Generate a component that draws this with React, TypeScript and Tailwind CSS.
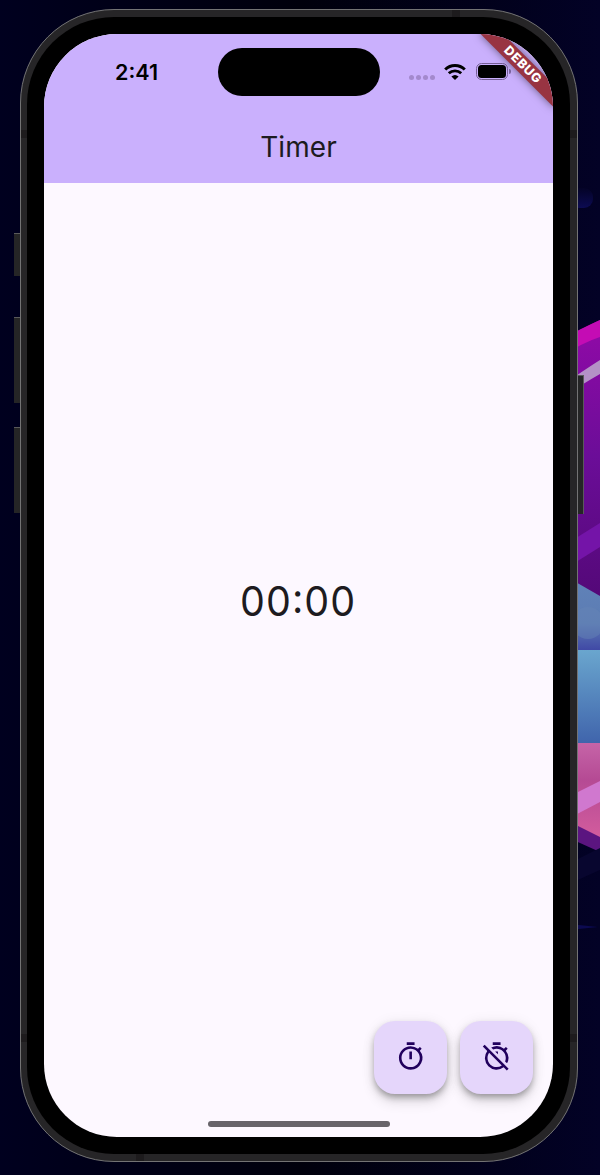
import React from "react";
import { MdOutlineTimer, MdOutlineTimerOff } from "react-icons/md";

function Wallpaper() {
  return (
    <svg className="absolute inset-y-0 right-0" width="40" height="1175" viewBox="560 0 40 1175">
      <defs>
        <linearGradient id="violet" x1="0" y1="340" x2="0" y2="600" gradientUnits="userSpaceOnUse">
          <stop offset="0" stopColor="#8c0aa5" />
          <stop offset="0.45" stopColor="#6b0d98" />
          <stop offset="1" stopColor="#530877" />
        </linearGradient>
        <linearGradient id="slate" x1="0" y1="580" x2="0" y2="652" gradientUnits="userSpaceOnUse">
          <stop offset="0" stopColor="#6082b8" />
          <stop offset="0.6" stopColor="#5c7cb3" />
          <stop offset="1" stopColor="#3e45a5" />
        </linearGradient>
        <linearGradient id="sky" x1="0" y1="650" x2="0" y2="745" gradientUnits="userSpaceOnUse">
          <stop offset="0" stopColor="#6aa6ce" />
          <stop offset="1" stopColor="#3f63ab" />
        </linearGradient>
        <linearGradient id="rose" x1="0" y1="742" x2="0" y2="850" gradientUnits="userSpaceOnUse">
          <stop offset="0" stopColor="#c665a8" />
          <stop offset="0.35" stopColor="#b54a94" />
          <stop offset="1" stopColor="#d9609f" />
        </linearGradient>
        <linearGradient id="bubble" x1="0" y1="188" x2="0" y2="208" gradientUnits="userSpaceOnUse">
          <stop offset="0" stopColor="#040327" />
          <stop offset="1" stopColor="#0c0b52" />
        </linearGradient>
      </defs>
      <rect x="570" y="188" width="23" height="20" rx="9" fill="url(#bubble)" />
      <path d="M560 340 600 320V600L560 580Z" fill="url(#violet)" />
      <path d="M560 340Q584 327 600 320V337Q584 342 560 357Z" fill="#c40cb4" />
      <path d="M560 387Q584 370 600 360V374Q584 383 560 399Z" fill="#b491c6" />
      <path d="M560 548 600 523V547L560 572Z" fill="#7414a8" />
      <path d="M560 573 600 596V652H560Z" fill="url(#slate)" />
      <circle cx="588" cy="623" r="16" fill="#6684b5" opacity="0.45" />
      <path d="M560 650H600V744H560Z" fill="url(#sky)" />
      <path d="M560 743H600V840L560 818Z" fill="url(#rose)" />
      <path d="M560 801 600 781V802L560 823Z" fill="#d078cf" />
      <path d="M560 817 600 837V852L560 834Z" fill="#5b1580" />
      <path d="M560 868 600 848V870L560 888Z" fill="#08062f" />
      <path d="M560 923 598 927 560 931Z" fill="#0c0a50" />
    </svg>
  );
}

function SideButton({ className }: { className: string }) {
  return <div className={`absolute border-t border-[#5a5a5b] bg-[#252526] ${className}`} />;
}

function StatusBar() {
  return (
    <div className="flex h-[76px] items-center">
      <span className="mt-px ml-[71px] w-[103px] text-[21.5px] leading-none font-semibold text-black">2:41</span>
      <div className="h-12 w-[162px] rounded-full bg-black" />
      <div className="mt-[11px] ml-[29px] flex gap-[2.4px]">
        <i className="size-[4.6px] rounded-full bg-[#a389cd]" />
        <i className="size-[4.6px] rounded-full bg-[#a389cd]" />
        <i className="size-[4.6px] rounded-full bg-[#a389cd]" />
        <i className="size-[4.6px] rounded-full bg-[#a389cd]" />
      </div>
      <svg className="-mt-px ml-[9px]" width="22" height="16" viewBox="0 0 22 16" fill="none">
        <path d="M1.2 5.5C6.7.2 15.3.2 20.8 5.5" stroke="#000" strokeWidth="3" />
        <path d="M4.8 9.3C8.3 6 13.7 6 17.2 9.3" stroke="#000" strokeWidth="2.9" />
        <path d="M11 16 7.4 12.6Q11 9.2 14.6 12.6Z" fill="#000" />
      </svg>
      <div className="-mt-px ml-[10px] flex items-center gap-px">
        <div className="flex h-[17px] w-8 rounded-[5.5px] border border-[#765f96] p-px">
          <div className="flex-1 rounded-[3.5px] bg-black" />
        </div>
        <div className="h-[5px] w-[2px] rounded-r-full bg-[#8069a5]" />
      </div>
    </div>
  );
}

function FloatingButton({ label, children }: { label: string; children: React.ReactNode }) {
  return (
    <button
      aria-label={label}
      className="flex size-[73px] items-center justify-center rounded-[21px] bg-[#e5d6fb] pb-px text-[#21005d] shadow-[0_4px_6px_-1px_rgba(0,0,0,0.3),0_8px_13px_rgba(0,0,0,0.12),0_1px_14px_rgba(0,0,0,0.07)]"
    >
      {children}
    </button>
  );
}

export default function App() {
  return (
    <div className="relative flex h-[1175px] w-[600px] overflow-hidden bg-linear-to-r from-[#00001f] via-[#00000c] to-[#030226] pt-[9px] pl-[20px] font-['Inter',sans-serif]">
      <Wallpaper />
      <SideButton className="top-[233px] left-[14px] h-[43px] w-[7px]" />
      <SideButton className="top-[317px] left-[14px] h-[86px] w-[7px]" />
      <SideButton className="top-[427px] left-[14px] h-[86px] w-[7px]" />
      <SideButton className="top-[375px] left-[577px] h-[139px] w-[7px] border-r" />

      <div className="relative h-[1153px] w-[558px] rounded-[94px] border border-[#737374] bg-[#262527] py-[7px] pr-[7px] pl-[6px]">
        <i className="absolute top-[120px] left-0 h-2 w-[6px] bg-[#1d1b1d]" />
        <i className="absolute top-[120px] right-0 h-2 w-[7px] bg-[#1d1b1d]" />
        <i className="absolute top-[1024px] left-0 h-2 w-[6px] bg-[#1d1b1d]" />
        <i className="absolute top-[1024px] right-0 h-2 w-[7px] bg-[#1d1b1d]" />
        <i className="absolute top-0 left-[431px] h-[7px] w-2 bg-[#1d1b1d]" />
        <i className="absolute bottom-0 left-[115px] h-[7px] w-2 bg-[#1d1b1d]" />
        <div className="relative h-full rounded-[87px] bg-black px-[17px] py-[17px]">
          <div className="relative flex h-[1103px] flex-col overflow-hidden rounded-[73px] bg-[#fdf8ff]">
            <header className="h-[148.5px] shrink-0 bg-[#cab0fd]">
              <StatusBar />
              <h1 className="flex h-[73px] items-center justify-center text-[28px] leading-none tracking-[0.1px] text-[#1d1b20]">
                Timer
              </h1>
            </header>
            <main className="flex flex-1 items-center justify-center pt-px">
              <span className="scale-x-95 text-[41.5px] leading-none tracking-[1.1px] text-[#1d1b20]">
                00<span className="inline-block -translate-y-[3px]">:</span>00
              </span>
            </main>
            <div className="flex h-[73px] shrink-0 justify-end gap-[12.6px] pr-5">
              <FloatingButton label="Start timer">
                <MdOutlineTimer size={31.3} />
              </FloatingButton>
              <FloatingButton label="Stop timer">
                <MdOutlineTimerOff size={31.3} />
              </FloatingButton>
            </div>
            <div className="flex h-[43.4px] shrink-0 justify-center pt-[27px]">
              <div className="h-[6px] w-[182px] rounded-full bg-[#68646a]" />
            </div>
            <div className="absolute top-[22.7px] -right-[21.7px] flex h-[15.6px] w-[104px] rotate-45 items-center justify-center bg-[#983442] text-[12.6px] leading-none font-extrabold tracking-[0.7px] text-white shadow-[0_0_8px_rgba(0,0,0,0.5)]">
              DEBUG
            </div>
          </div>
        </div>
      </div>
    </div>
  );
}
